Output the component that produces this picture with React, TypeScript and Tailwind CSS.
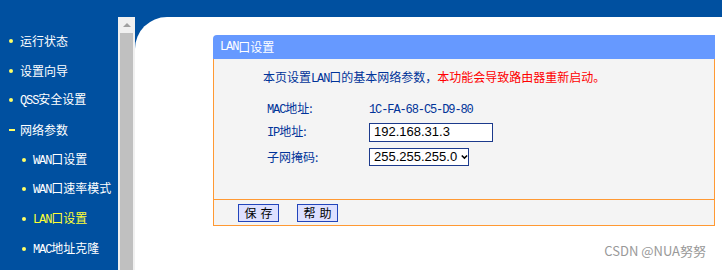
import React from "react";

const cn = { fontFamily: '"Noto Sans CJK SC", "Noto Sans", sans-serif' };
const mono = { fontFamily: '"Liberation Mono", "DejaVu Sans Mono", monospace' };

function T({ s }: { s: string }) {
  const parts = s.split(/([A-Za-z0-9\-]+)/).filter((p) => p.length > 0);
  return (
    <>
      {parts.map((p, i) =>
        /^[A-Za-z0-9\-]+$/.test(p) ? (
          <span key={i} className="text-[12px] tracking-[-1.1px]" style={mono}>
            {p}
          </span>
        ) : (
          <span key={i}>{p}</span>
        )
      )}
    </>
  );
}

function NavItem({ label, sub, active, dash }: { label: string; sub?: boolean; active?: boolean; dash?: boolean }) {
  return (
    <div className={`flex items-center h-[29.7px] whitespace-nowrap ${sub ? "pl-[22px]" : "pl-[9px]"}`}>
      {dash ? (
        <span className="w-[6px] h-[2px] bg-[#ffff66] mr-[5px] shrink-0" />
      ) : (
        <span className="w-[4px] h-[4px] rounded-full bg-[#ffff66] mr-[7px] shrink-0" />
      )}
      <span className={`text-[12px] leading-none ${active ? "text-[#ffff33]" : "text-white"}`}>
        <T s={label} />
      </span>
    </div>
  );
}

export default function App() {
  return (
    <div className="w-[722px] h-[270px] bg-[#0050a0] flex overflow-hidden" style={cn}>
      <div className="w-[118px] shrink-0 pt-[26px] flex flex-col overflow-hidden">
        <NavItem label="运行状态" />
        <NavItem label="设置向导" />
        <NavItem label="QSS安全设置" />
        <NavItem label="网络参数" dash />
        <NavItem label="WAN口设置" sub />
        <NavItem label="WAN口速率模式" sub />
        <NavItem label="LAN口设置" sub active />
        <NavItem label="MAC地址克隆" sub />
      </div>
      <div className="flex-1 pt-[17px] flex">
        <div className="w-[17px] bg-[#f0f0f0] flex flex-col items-center">
          <div className="h-[16px] flex items-center justify-center">
            <div className="w-0 h-0 border-l-[4px] border-r-[4px] border-b-[4px] border-l-transparent border-r-transparent border-b-[#a0a0a0]" />
          </div>
          <div className="w-[13px] flex-1 bg-[#c0c0c0]" />
        </div>
        <div className="flex-1 bg-white rounded-tl-[32px] pt-[18px] pl-[78px] flex flex-col">
          <div className="w-[502px]">
            <div className="h-[24px] bg-[#6699ff] rounded-tl-[4px] pl-[7px] flex items-center text-white text-[12px]">
              <T s="LAN口设置" />
            </div>
            <div className="bg-[#f4f4f4] border-l border-r border-b border-[#ff9933]">
              <div className="h-[140px] pt-[10px] text-[12px]">
                <div className="pl-[49px] h-[16px] leading-[16px] whitespace-nowrap">
                  <span className="text-[#003399]">
                    <T s="本页设置LAN口的基本网络参数，" />
                  </span>
                  <span className="text-[#ff0000]">本功能会导致路由器重新启动。</span>
                </div>
                <div className="pl-[53px] mt-[14px] flex flex-col text-[#003399]">
                  <div className="flex items-center h-[20px]">
                    <span className="w-[102px]">
                      <T s="MAC地址" />:
                    </span>
                    <span>
                      <T s="1C-FA-68-C5-D9-80" />
                    </span>
                  </div>
                  <div className="flex items-center h-[24px] mt-[1px]">
                    <span className="w-[102px]">
                      <T s="IP地址" />:
                    </span>
                    <div
                      className="w-[124px] h-[19px] border border-[#1c3a8c] bg-white flex items-center pl-[4px] text-black text-[13px]"
                      style={{ fontFamily: '"Liberation Sans", Arial, sans-serif' }}
                    >
                      192.168.31.3
                    </div>
                  </div>
                  <div className="flex items-center h-[26px]">
                    <span className="w-[102px]">子网掩码:</span>
                    <div
                      className="w-[100px] h-[18px] border border-[#1c3a8c] bg-white flex items-center pl-[4px] text-black text-[13px] gap-[4px]"
                      style={{ fontFamily: '"Liberation Sans", Arial, sans-serif' }}
                    >
                      <span>255.255.255.0</span>
                      <svg width="9" height="6" viewBox="0 0 9 6">
                        <path d="M1 1 L4.5 4.5 L8 1" stroke="#000" strokeWidth="2" fill="none" />
                      </svg>
                    </div>
                  </div>
                </div>
              </div>
              <div className="border-t border-[#ff9933] h-[26px] flex items-center pl-[24px] gap-[18px]">
                <button className="w-[41px] h-[18px] bg-[#dde0ff] border border-[#2244bb] text-[12px] text-black leading-none tracking-[4px] pl-[4px]">
                  保存
                </button>
                <button className="w-[41px] h-[18px] bg-[#dde0ff] border border-[#2244bb] text-[12px] text-black leading-none tracking-[4px] pl-[4px]">
                  帮助
                </button>
              </div>
            </div>
          </div>
          <div className="flex-1 flex items-end justify-end pr-[16px] pb-[10px]">
            <span className="text-[13px] text-[#999999]">CSDN @NUA努努</span>
          </div>
        </div>
      </div>
    </div>
  );
}
